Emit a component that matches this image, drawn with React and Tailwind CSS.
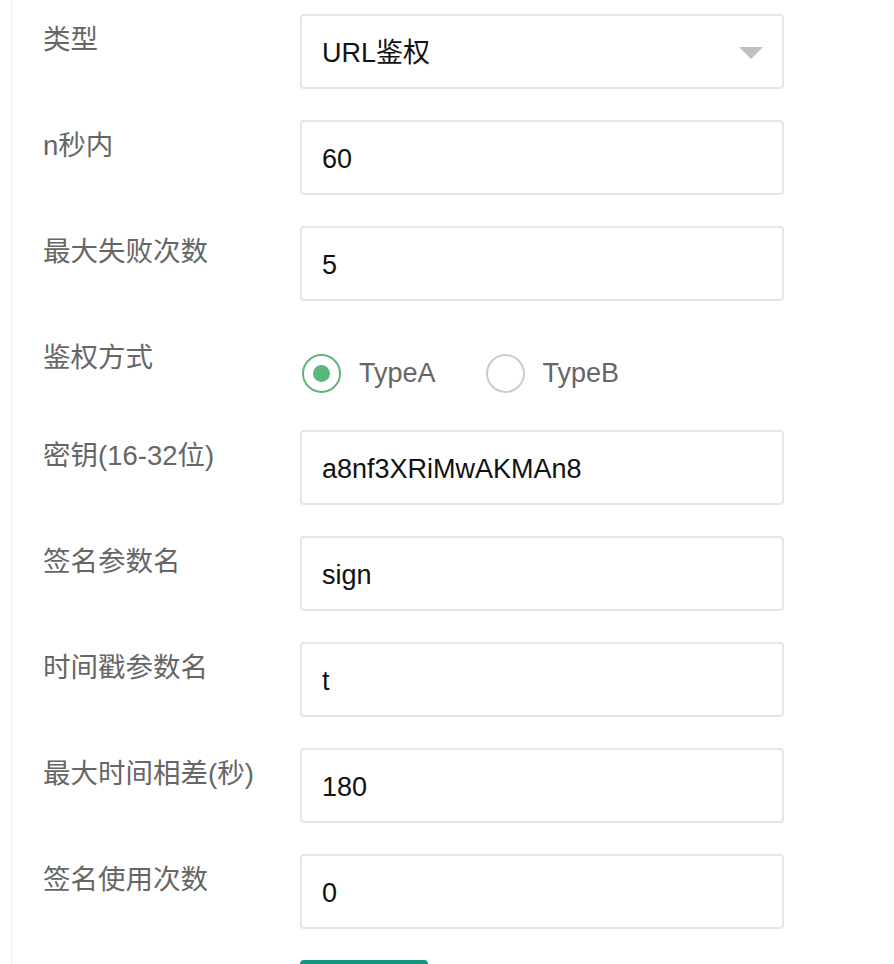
import React from "react";

const font = { fontFamily: '"Liberation Sans", "Noto Sans CJK SC", sans-serif' };

function Label({ children }) {
  return (
    <div className="w-[257px] shrink-0 pt-[6px] text-[27.5px] leading-[40px] text-[#666]">
      {children}
    </div>
  );
}

function Field({ label, value, select }) {
  return (
    <div className="flex mb-[31px]">
      <Label>{label}</Label>
      <div className="relative flex h-[75px] w-[484px] items-center rounded-[4px] border-2 border-[#e6e6e6] bg-white pl-[20px] pt-[3px] text-[27px] text-[#111]">
        <span>{value}</span>
        {select && (
          <svg className="absolute right-[19px] top-[31px]" width="24" height="12" viewBox="0 0 24 12">
            <polygon points="0,0 24,0 12,12" fill="#c0c0c0" />
          </svg>
        )}
      </div>
    </div>
  );
}

function Radio({ checked, label }) {
  return (
    <div className="flex items-center">
      <div
        className={
          "flex h-[39px] w-[39px] items-center justify-center rounded-full border-2 " +
          (checked ? "border-[#5cb87a]" : "border-[#cccccc]")
        }
      >
        {checked && <div className="h-[17px] w-[17px] rounded-full bg-[#5cb87a]" />}
      </div>
      <span className="ml-[18px] text-[27px] text-[#666]">{label}</span>
    </div>
  );
}

export default function App() {
  return (
    <div className="min-h-screen bg-white" style={font}>
      <div className="ml-[11px] min-h-[964px] border-l border-[#f0f0f0] pl-[31px] pt-[14px]">
        <Field label="类型" value="URL鉴权" select />
        <Field label="n秒内" value="60" />
        <Field label="最大失败次数" value="5" />
        <div className="flex mb-[31px] h-[67px]">
          <Label>鉴权方式</Label>
          <div className="flex items-start gap-[50px] pt-[21px] pl-[2px]">
            <Radio checked label="TypeA" />
            <Radio label="TypeB" />
          </div>
        </div>
        <Field label="密钥(16-32位)" value="a8nf3XRiMwAKMAn8" />
        <Field label="签名参数名" value="sign" />
        <Field label="时间戳参数名" value="t" />
        <Field label="最大时间相差(秒)" value="180" />
        <Field label="签名使用次数" value="0" />
        <div className="flex">
          <div className="w-[257px] shrink-0" />
          <button aria-label="保存" className="h-[48px] w-[128px] rounded-[4px] bg-[#13967f]" />
        </div>
      </div>
    </div>
  );
}
